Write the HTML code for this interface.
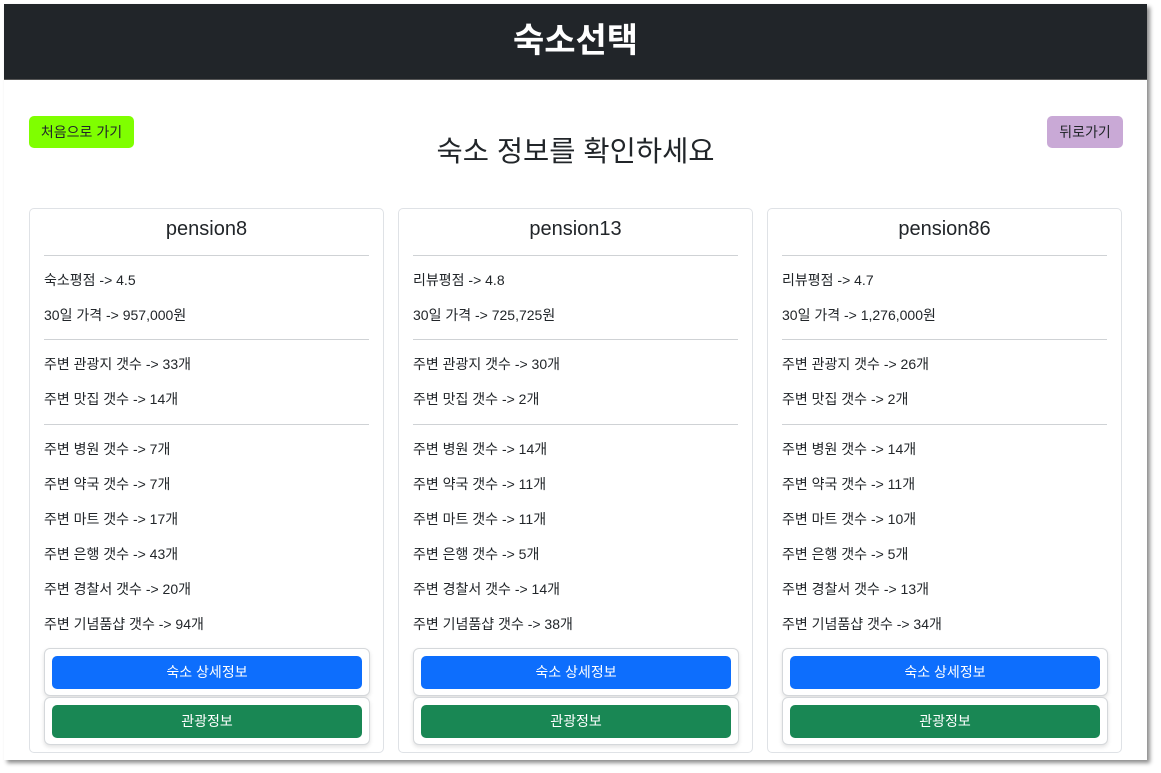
<!DOCTYPE html>
<html><head><meta charset="utf-8">
<style>
*{box-sizing:border-box;margin:0;padding:0}
body{width:1161px;height:773px;background:#fff;font-family:"Liberation Sans","Noto Sans CJK KR",sans-serif;color:#212529;position:relative;overflow:hidden}
.page{position:absolute;left:4px;top:4px;width:1143px;height:756px;background:#fff;box-shadow:3px 3px 4px rgba(0,0,0,.45)}
.hdr{position:absolute;left:0;top:0;width:1143px;height:76px;background:#212529;border-bottom:1px solid #555;color:#fff;font-weight:bold;font-size:34px;text-align:center;line-height:74px}
.btn{position:absolute;border-radius:5px;font-size:14px;text-align:center;line-height:32px;height:32px}
h2{position:absolute;left:0;width:1143px;top:130px;text-align:center;font-weight:normal;font-size:28.5px;line-height:36px}
.card{position:absolute;top:204px;width:355px;height:545px;border:1px solid #dfe2e6;border-radius:5px}
.card .t{position:absolute;left:0;width:100%;top:6px;text-align:center;font-size:20px;line-height:28px}
.hr{position:absolute;left:14px;right:14px;height:1px;background:#cfd2d5}
.r{position:absolute;left:14px;font-size:14px;line-height:20px;margin-top:-4px}
.box{position:absolute;left:14px;width:326px;height:48px;border:1px solid #d5d8db;border-radius:6px;box-shadow:0 2px 4px rgba(0,0,0,.12);background:#fff}
.box div{position:absolute;left:7px;top:7px;width:310px;height:33px;border-radius:5px;color:#fff;font-size:14px;text-align:center;line-height:33px}
</style></head><body>
<div class="page">
<div class="hdr">숙소선택</div>
<div class="btn" style="left:25px;top:112px;width:105px;background:#7fff00;">처음으로 가기</div>
<div class="btn" style="left:1043px;top:112px;width:76px;background:#c9a9d6;">뒤로가기</div>
<h2>숙소 정보를 확인하세요</h2>

<div class="card" style="left:25px">
<div class="t">pension8</div>
<div class="hr" style="top:46px"></div>
<div class="r" style="top:65px">숙소평점 -&gt; 4.5</div>
<div class="r" style="top:100px">30일 가격 -&gt; 957,000원</div>
<div class="hr" style="top:130px"></div>
<div class="r" style="top:149px">주변 관광지 갯수 -&gt; 33개</div>
<div class="r" style="top:184px">주변 맛집 갯수 -&gt; 14개</div>
<div class="hr" style="top:215px"></div>
<div class="r" style="top:234px">주변 병원 갯수 -&gt; 7개</div>
<div class="r" style="top:269px">주변 약국 갯수 -&gt; 7개</div>
<div class="r" style="top:304px">주변 마트 갯수 -&gt; 17개</div>
<div class="r" style="top:339px">주변 은행 갯수 -&gt; 43개</div>
<div class="r" style="top:374px">주변 경찰서 갯수 -&gt; 20개</div>
<div class="r" style="top:409px">주변 기념품샵 갯수 -&gt; 94개</div>
<div class="box" style="top:439px"><div style="background:#0d6efd">숙소 상세정보</div></div>
<div class="box" style="top:488px"><div style="background:#198754">관광정보</div></div>
</div>

<div class="card" style="left:394px">
<div class="t">pension13</div>
<div class="hr" style="top:46px"></div>
<div class="r" style="top:65px">리뷰평점 -&gt; 4.8</div>
<div class="r" style="top:100px">30일 가격 -&gt; 725,725원</div>
<div class="hr" style="top:130px"></div>
<div class="r" style="top:149px">주변 관광지 갯수 -&gt; 30개</div>
<div class="r" style="top:184px">주변 맛집 갯수 -&gt; 2개</div>
<div class="hr" style="top:215px"></div>
<div class="r" style="top:234px">주변 병원 갯수 -&gt; 14개</div>
<div class="r" style="top:269px">주변 약국 갯수 -&gt; 11개</div>
<div class="r" style="top:304px">주변 마트 갯수 -&gt; 11개</div>
<div class="r" style="top:339px">주변 은행 갯수 -&gt; 5개</div>
<div class="r" style="top:374px">주변 경찰서 갯수 -&gt; 14개</div>
<div class="r" style="top:409px">주변 기념품샵 갯수 -&gt; 38개</div>
<div class="box" style="top:439px"><div style="background:#0d6efd">숙소 상세정보</div></div>
<div class="box" style="top:488px"><div style="background:#198754">관광정보</div></div>
</div>

<div class="card" style="left:763px">
<div class="t">pension86</div>
<div class="hr" style="top:46px"></div>
<div class="r" style="top:65px">리뷰평점 -&gt; 4.7</div>
<div class="r" style="top:100px">30일 가격 -&gt; 1,276,000원</div>
<div class="hr" style="top:130px"></div>
<div class="r" style="top:149px">주변 관광지 갯수 -&gt; 26개</div>
<div class="r" style="top:184px">주변 맛집 갯수 -&gt; 2개</div>
<div class="hr" style="top:215px"></div>
<div class="r" style="top:234px">주변 병원 갯수 -&gt; 14개</div>
<div class="r" style="top:269px">주변 약국 갯수 -&gt; 11개</div>
<div class="r" style="top:304px">주변 마트 갯수 -&gt; 10개</div>
<div class="r" style="top:339px">주변 은행 갯수 -&gt; 5개</div>
<div class="r" style="top:374px">주변 경찰서 갯수 -&gt; 13개</div>
<div class="r" style="top:409px">주변 기념품샵 갯수 -&gt; 34개</div>
<div class="box" style="top:439px"><div style="background:#0d6efd">숙소 상세정보</div></div>
<div class="box" style="top:488px"><div style="background:#198754">관광정보</div></div>
</div>
</div>
</body></html>
